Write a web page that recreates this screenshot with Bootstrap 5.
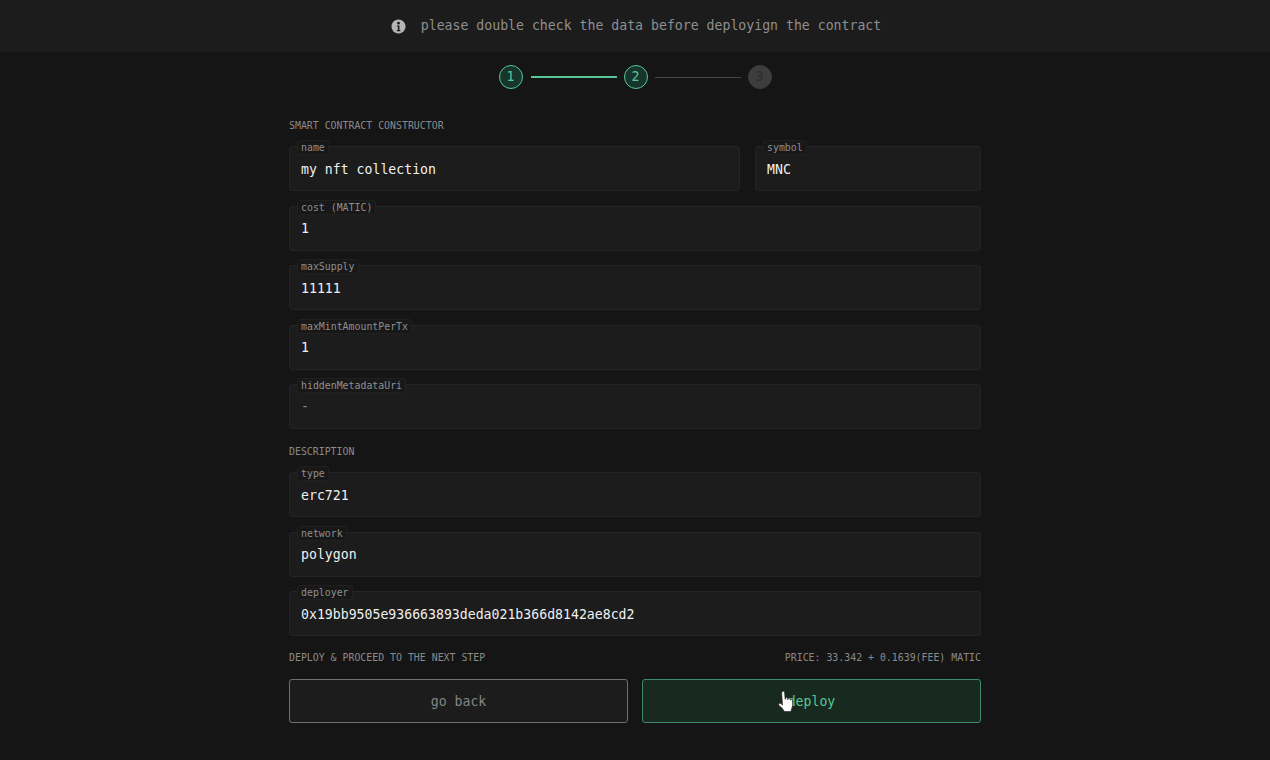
<!DOCTYPE html>
<html lang="en">
<head>
<meta charset="utf-8">
<title>Deploy contract</title>
<link href="https://cdn.jsdelivr.net/npm/bootstrap@5.3.0/dist/css/bootstrap.min.css" rel="stylesheet">
<style>
html,body{height:100%}
body{background:#151515;color:#eee;font-family:"DejaVu Sans Mono","Liberation Mono",monospace;font-size:13.2px;overflow:hidden}
.notice-bar{height:52px;background:#1c1c1c;color:#8f8f8f;gap:15px;padding-left:2px}
.notice-bar svg{width:15px;height:15px}
.stepper{height:50px}
.step-dot{width:24px;height:24px;border-radius:50%;border:1px solid #57c797;background:#17352a;color:#57c797;font-size:13.2px;line-height:1;flex:none}
.step-dot.todo{background:#3d3d3d;border-color:#3d3d3d;color:#2c2c2c}
.step-line{width:86px;height:1px;background:#444;margin:0 7px}
.step-line.done{height:2px;background:#57c797;margin-left:8px}
.form-wrap{width:692px}
.sec-title{font-size:9.9px;line-height:12px;color:#8a8a8a;margin:0}
.sec-one{margin-top:18px;margin-bottom:14.4px}
.sec-two{margin-top:17px;margin-bottom:14.4px}
.field-box{position:relative;height:45px;margin-bottom:14.4px}
.field-box .form-control{height:45px;background:#1c1c1c;border:1px solid #242424;border-radius:3px;color:#f0f0f0;font-size:13.2px;padding:1px 11px 0;font-family:inherit;box-shadow:none}
.field-box .form-control.muted-val{color:#8a8a8a}
.field-tag{position:absolute;left:8px;top:-6px;background:#181818;border:1px solid #202020;color:#8f8f8f;font-size:9.9px;line-height:13px;padding:0 3px;border-radius:3px;margin:0}
.pair-gap{gap:15px}
.pair-wide{flex:0 0 451px}
.foot-row{margin-top:16px;margin-bottom:15px}
.btn-row{gap:14px}
.act-btn{flex:1 1 0;height:44px;border-radius:3px;font-family:inherit;font-size:13.2px;padding:1px 0 0}
.act-back{background:#1c1c1c;border:1px solid #6f6f6f;color:#858585}
.act-deploy{background:#18291f;border:1px solid #3f8a6c;color:#57c797;position:relative}
.hand-cursor{position:absolute;left:134px;top:10px;width:18px;height:26px}
</style>
</head>
<body>
<div class="notice-bar d-flex align-items-center justify-content-center">
  <svg viewBox="0 0 16 16" aria-hidden="true"><circle cx="8" cy="8" r="7.5" fill="#b5b5b5"/><circle cx="8" cy="4.4" r="1.4" fill="#1c1c1c"/><path d="M6.2 6.8h2.8v5h1v1.2H6.2v-1.2h1.1V8H6.2z" fill="#1c1c1c"/></svg>
  <span>please double check the data before deployign the contract</span>
</div>

<div class="stepper d-flex align-items-center justify-content-center">
  <div class="step-dot d-flex align-items-center justify-content-center">1</div>
  <div class="step-line done"></div>
  <div class="step-dot d-flex align-items-center justify-content-center">2</div>
  <div class="step-line"></div>
  <div class="step-dot todo d-flex align-items-center justify-content-center">3</div>
</div>

<main class="form-wrap mx-auto">
  <p class="sec-title sec-one">SMART CONTRACT CONSTRUCTOR</p>
  <div class="d-flex pair-gap">
    <div class="field-box pair-wide">
      <input class="form-control" readonly value="my nft collection"><label class="field-tag">name</label>
    </div>
    <div class="field-box flex-grow-1">
      <input class="form-control" readonly value="MNC"><label class="field-tag">symbol</label>
    </div>
  </div>
  <div class="field-box"><input class="form-control" readonly value="1"><label class="field-tag">cost (MATIC)</label></div>
  <div class="field-box"><input class="form-control" readonly value="11111"><label class="field-tag">maxSupply</label></div>
  <div class="field-box"><input class="form-control" readonly value="1"><label class="field-tag">maxMintAmountPerTx</label></div>
  <div class="field-box"><input class="form-control muted-val" readonly value="-"><label class="field-tag">hiddenMetadataUri</label></div>

  <p class="sec-title sec-two">DESCRIPTION</p>
  <div class="field-box"><input class="form-control" readonly value="erc721"><label class="field-tag">type</label></div>
  <div class="field-box"><input class="form-control" readonly value="polygon"><label class="field-tag">network</label></div>
  <div class="field-box"><input class="form-control" readonly value="0x19bb9505e936663893deda021b366d8142ae8cd2"><label class="field-tag">deployer</label></div>

  <div class="foot-row d-flex justify-content-between">
    <p class="sec-title">DEPLOY &amp; PROCEED TO THE NEXT STEP</p>
    <p class="sec-title">PRICE: 33.342 + 0.1639(FEE) MATIC</p>
  </div>
  <div class="btn-row d-flex">
    <button type="button" class="btn act-btn act-back">go back</button>
    <button type="button" class="btn act-btn act-deploy">deploy
      <svg class="hand-cursor" viewBox="0 0 16 24" aria-hidden="true"><path d="M4.6 1.6c.8-.8 2-.3 2.100.8l.5 6.200.4-.1.1-.9c.1-1 1.600-1 1.800 0l.1 1.100.4.1.2-.7c.2-.9 1.600-.8 1.700.2l.1 1 .4.1.1-.4c.3-.8 1.400-.6 1.500.3.2 2.300.2 4.800-.4 6.800-.4 1.500-.9 2.700-1.100 3.800H6.400c-.6-1.600-1.900-3-3.200-4.500C2.200 15.400 1 14 1.300 12.900c.3-1 1.500-.9 2.300-.1l1.200 1.200L4 3.200c-.1-.7.2-1.200.6-1.600z" fill="#fff" stroke="#222" stroke-width=".6"/></svg>
    </button>
  </div>
</main>
<script src="https://cdn.jsdelivr.net/npm/bootstrap@5.3.0/dist/js/bootstrap.bundle.min.js"></script>
</body>
</html>
